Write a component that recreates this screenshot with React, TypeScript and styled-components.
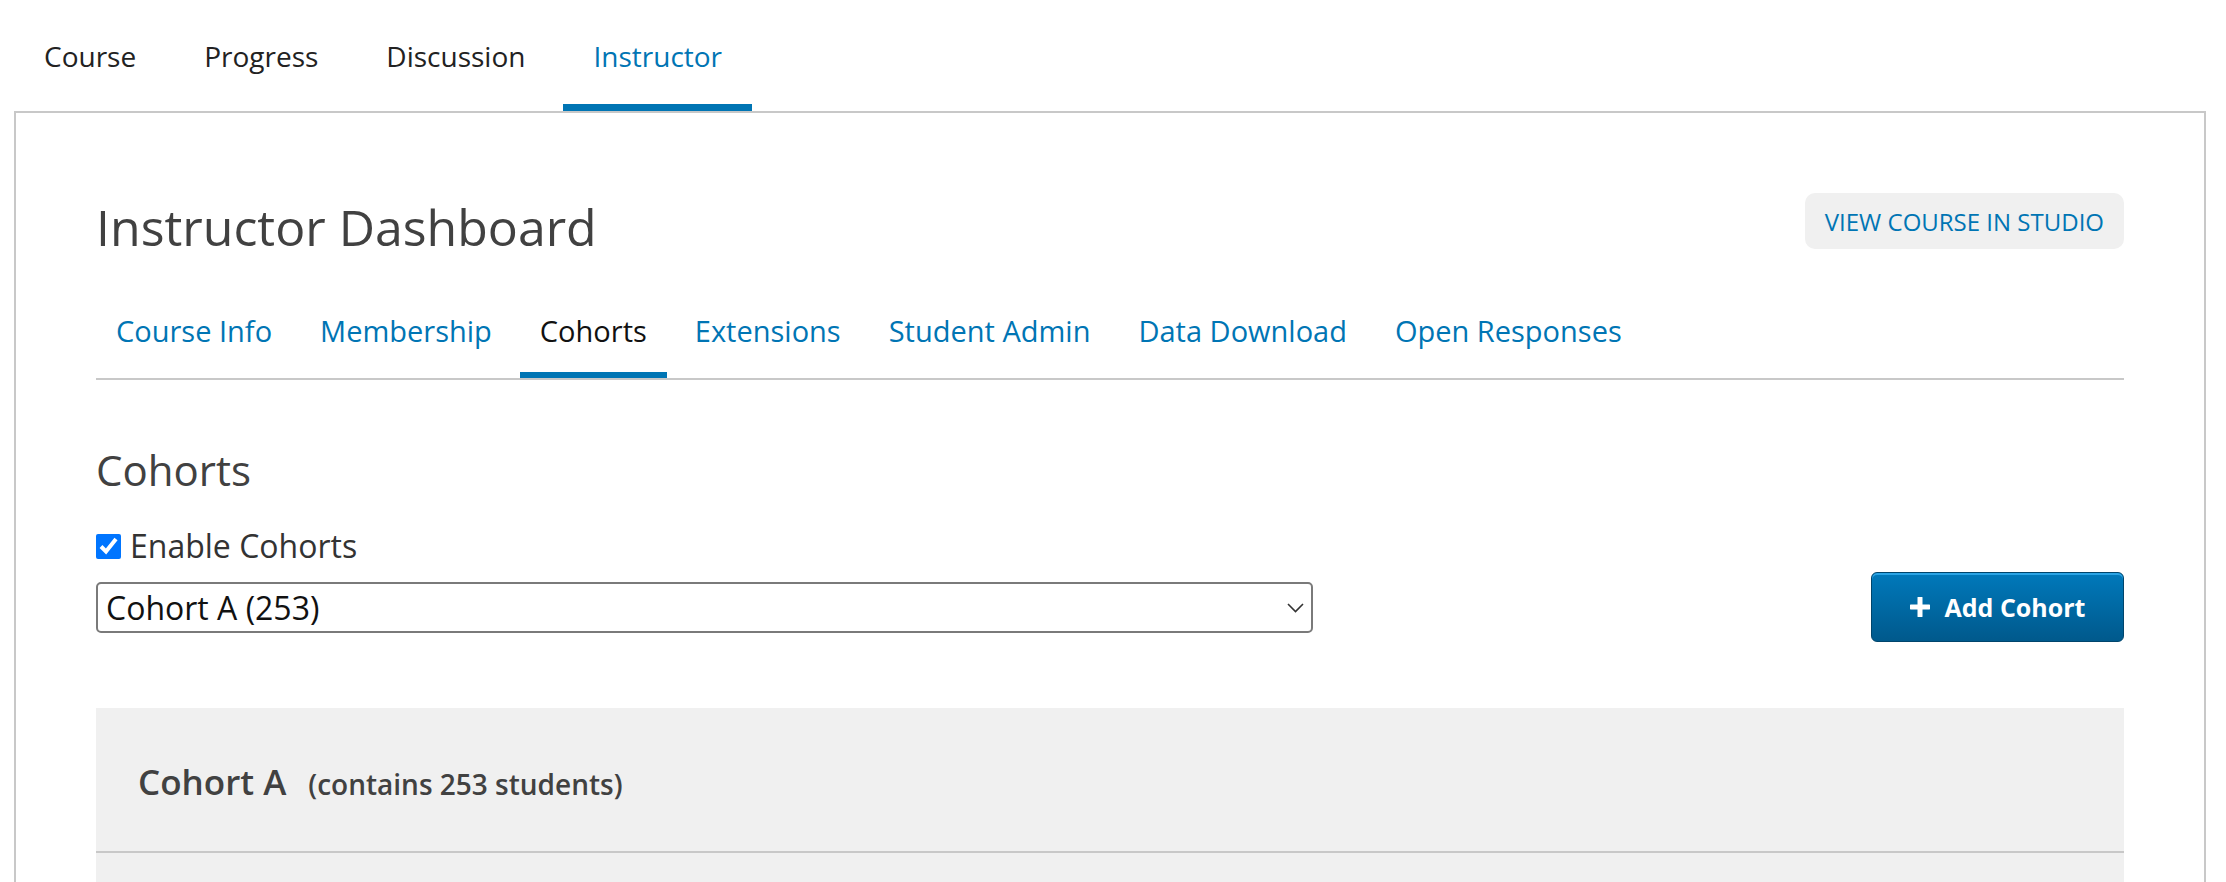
import React from "react";
import styled, { createGlobalStyle } from "styled-components";

const GlobalStyle = createGlobalStyle`
  html, body { margin: 0; padding: 0; background: #ffffff; }
  body { font-family: "Open Sans", "Noto Sans", Arial, sans-serif; color: #333; }
  * { box-sizing: border-box; }
`;

const Page = styled.div`
  padding: 0 20px 0 14px;
`;

const TopNav = styled.nav`
  display: flex;
  gap: 8px;
`;

const NavTab = styled.a<{ $active?: boolean }>`
  display: block;
  padding: 35px 30px 27px;
  font-size: 28px;
  line-height: 42px;
  color: ${(p) => (p.$active ? "#0075b4" : "#222222")};
  border-bottom: 7px solid ${(p) => (p.$active ? "#0075b4" : "transparent")};
  text-decoration: none;
  cursor: pointer;
`;

const Card = styled.main`
  border: 2px solid #c8c8c8;
  padding: 80px 80px 0;
  min-height: 800px;
`;

const HeaderRow = styled.div`
  display: flex;
  justify-content: space-between;
  align-items: flex-start;
`;

const Title = styled.h1`
  margin: 4px 0 0;
  font-size: 50px;
  line-height: 60px;
  font-weight: 400;
  color: #414141;
`;

const StudioButton = styled.button`
  height: 56px;
  padding: 0 20px;
  border: none;
  border-radius: 10px;
  background: #f0f0f0;
  color: #0075b4;
  font-family: "Open Sans", sans-serif;
  font-size: 24px;
  cursor: pointer;
`;

const SubTabs = styled.ul`
  list-style: none;
  margin: 33px 0 0;
  padding: 0;
  display: flex;
  gap: 8px;
  border-bottom: 2px solid #c8c8c8;
`;

const SubTab = styled.li<{ $active?: boolean }>`
  padding: 20px 20px;
  font-size: 29px;
  line-height: 42px;
  color: ${(p) => (p.$active ? "#111111" : "#0075b4")};
  border-bottom: 6px solid ${(p) => (p.$active ? "#0075b4" : "transparent")};
  cursor: pointer;
`;

const SectionTitle = styled.h2`
  margin: 65px 0 0;
  font-size: 42px;
  line-height: 50px;
  font-weight: 400;
  color: #414141;
`;

const CheckRow = styled.label`
  margin-top: 31px;
  display: flex;
  align-items: center;
  gap: 9px;
  height: 40px;
  font-size: 32px;
  line-height: 40px;
  color: #333333;
`;

const Check = styled.input`
  width: 25px;
  height: 25px;
  margin: 0;
  accent-color: #0075ff;
`;

const ControlRow = styled.div`
  margin-top: 6px;
  display: flex;
  justify-content: space-between;
  align-items: center;
`;

const SelectWrap = styled.div`
  position: relative;
  width: 1217px;
`;

const Select = styled.select`
  width: 100%;
  height: 51px;
  appearance: none;
  border: 2px solid #7a7a7a;
  border-radius: 5px;
  background: #ffffff;
  padding: 0 40px 0 8px;
  font-family: "Open Sans", sans-serif;
  font-size: 32px;
  color: #111111;
`;

const Chevron = styled.svg`
  position: absolute;
  right: 9px;
  top: 21px;
  pointer-events: none;
`;

const AddButton = styled.button`
  width: 253px;
  height: 70px;
  display: flex;
  align-items: center;
  justify-content: center;
  gap: 15px;
  border: 1px solid #00456c;
  border-radius: 6px;
  background: linear-gradient(#0079bb, #00598c);
  box-shadow: inset 0 2px 0 #2aa3e4;
  color: #ffffff;
  font-family: "Open Sans", sans-serif;
  font-weight: 700;
  font-size: 25px;
  cursor: pointer;
`;

const Panel = styled.section`
  margin-top: 66px;
  background: #f0f0f0;
`;

const PanelHeader = styled.h3`
  margin: 0;
  padding: 50px 42px 43px;
  border-bottom: 2px solid #c8c8c8;
  font-size: 35px;
  line-height: 48px;
  font-weight: 600;
  color: #414141;
`;

const Count = styled.span`
  margin-left: 22px;
  font-size: 28px;
  font-weight: 600;
  color: #414141;
`;

const PanelBody = styled.div`
  height: 200px;
`;

const topTabs = ["Course", "Progress", "Discussion", "Instructor"];
const subTabs = [
  "Course Info",
  "Membership",
  "Cohorts",
  "Extensions",
  "Student Admin",
  "Data Download",
  "Open Responses",
];

export default function App() {
  return (
    <Page>
      <GlobalStyle />
      <TopNav>
        {topTabs.map((t) => (
          <NavTab key={t} $active={t === "Instructor"}>
            {t}
          </NavTab>
        ))}
      </TopNav>
      <Card>
        <HeaderRow>
          <Title>Instructor Dashboard</Title>
          <StudioButton>VIEW COURSE IN STUDIO</StudioButton>
        </HeaderRow>
        <SubTabs>
          {subTabs.map((t) => (
            <SubTab key={t} $active={t === "Cohorts"}>
              {t}
            </SubTab>
          ))}
        </SubTabs>
        <SectionTitle>Cohorts</SectionTitle>
        <CheckRow>
          <Check type="checkbox" defaultChecked />
          Enable Cohorts
        </CheckRow>
        <ControlRow>
          <SelectWrap>
            <Select defaultValue="a">
              <option value="a">Cohort A (253)</option>
            </Select>
            <Chevron width="17" height="10" viewBox="0 0 17 10">
              <path d="M1 1 L8.5 8.5 L16 1" fill="none" stroke="#333" strokeWidth="1.6" />
            </Chevron>
          </SelectWrap>
          <AddButton>
            <svg width="20" height="20" viewBox="0 0 20 20">
              <path d="M10 1 V19 M1 10 H19" stroke="#fff" strokeWidth="5" strokeLinecap="round" />
            </svg>
            Add Cohort
          </AddButton>
        </ControlRow>
        <Panel>
          <PanelHeader>
            Cohort A<Count>(contains 253 students)</Count>
          </PanelHeader>
          <PanelBody />
        </Panel>
      </Card>
    </Page>
  );
}
